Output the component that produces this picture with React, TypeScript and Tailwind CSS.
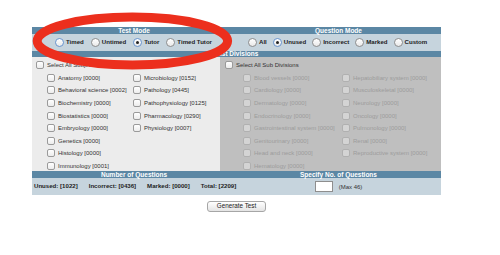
import React from "react";

const font = { fontFamily: '"Liberation Sans", Arial, sans-serif' };

const subjects: [string, string][] = [
  ["Anatomy [0000]", "Microbiology [0152]"],
  ["Behavioral science [0002]", "Pathology [0445]"],
  ["Biochemistry [0000]", "Pathophysiology [0125]"],
  ["Biostatistics [0000]", "Pharmacology [0290]"],
  ["Embryology [0000]", "Physiology [0007]"],
  ["Genetics [0000]", ""],
  ["Histology [0000]", ""],
  ["Immunology [0001]", ""],
];

const subDivisions: [string, string][] = [
  ["Blood vessels [0000]", "Hepatobiliary system [0000]"],
  ["Cardiology [0000]", "Musculoskeletal [0000]"],
  ["Dermatology [0000]", "Neurology [0000]"],
  ["Endocrinology [0000]", "Oncology [0000]"],
  ["Gastrointestinal system [0000]", "Pulmonology [0000]"],
  ["Genitourinary [0000]", "Renal [0000]"],
  ["Head and neck [0000]", "Reproductive system [0000]"],
  ["Hematology [0000]", ""],
];

function Radio({ label, checked, focus }: { label: string; checked?: boolean; focus?: boolean }) {
  return (
    <span className="flex items-center gap-[2px]">
      <span
        className={[
          "flex h-[9px] w-[9px] items-center justify-center rounded-full border bg-[linear-gradient(180deg,#ffffff_0%,#e9e9e9_100%)]",
          checked || focus ? "border-[#6a95cf]" : "border-[#8e8e8e]",
        ].join(" ")}
      >
        {checked ? <span className="h-[3px] w-[3px] rounded-full bg-[#222]" /> : null}
      </span>
      <span className="whitespace-nowrap text-[6.1px] font-bold leading-none text-[#222]">{label}</span>
    </span>
  );
}

function Check({ label, disabled }: { label: string; disabled?: boolean }) {
  return (
    <span className="flex items-center gap-[3px]">
      <span
        className={[
          "h-[8px] w-[8px] shrink-0 rounded-[2px] border",
          disabled ? "border-[#b0b0b0] bg-[#d4d4d4]" : "border-[#9a9a9a] bg-[linear-gradient(180deg,#ffffff_0%,#ececec_100%)]",
        ].join(" ")}
      />
      <span className={["whitespace-nowrap text-[6px] leading-none", disabled ? "text-[#9c9c9c]" : "text-[#333]"].join(" ")}>
        {label}
      </span>
    </span>
  );
}

export default function App() {
  return (
    <div className="relative h-[255px] w-[500px] overflow-hidden bg-white" style={font}>
      <div className="ml-[32px] w-[409px] pt-[27px]">
        <div className="grid h-[7px] grid-cols-[204px_205px] bg-[#5b87a4] text-[6.5px] font-bold leading-[7px] text-white">
          <div className="text-center">Test Mode</div>
          <div className="text-center">Question Mode</div>
        </div>
        <div className="flex h-[17px] bg-[#c6d4dd]">
          <div className="flex w-[188px] items-center gap-[7px] pl-[23px]">
            <Radio label="Timed" focus />
            <Radio label="Untimed" />
            <Radio label="Tutor" checked />
            <Radio label="Timed Tutor" />
          </div>
          <div className="flex items-center gap-[6px] pl-[28px]">
            <Radio label="All" />
            <Radio label="Unused" checked />
            <Radio label="Incorrect" />
            <Radio label="Marked" />
            <Radio label="Custom" />
          </div>
        </div>
        <div className="h-[6px] whitespace-nowrap bg-[#5b87a4] pl-[184px] text-[6.5px] font-bold leading-[6px] text-white">
          List Divisions
        </div>
        <div className="flex h-[114px]">
          <div className="w-[188px] bg-[#ececec] pt-[2px]">
            <div className="flex h-[12.6px] items-center pl-[4px]">
              <Check label="Select All Subjects" />
            </div>
            {subjects.map(([a, b]) => (
              <div key={a} className="grid h-[12.6px] grid-cols-[86px_1fr] items-center pl-[15px]">
                <Check label={a} />
                {b ? <Check label={b} /> : <span />}
              </div>
            ))}
          </div>
          <div className="flex-1 bg-[#bfbfbf] pt-[2px]">
            <div className="flex h-[12.6px] items-center pl-[5px]">
              <Check label="Select All Sub Divisions" />
            </div>
            {subDivisions.map(([a, b]) => (
              <div key={a} className="grid h-[12.6px] grid-cols-[99px_1fr] items-center pl-[23px]">
                <Check label={a} disabled />
                {b ? <Check label={b} disabled /> : <span />}
              </div>
            ))}
          </div>
        </div>
        <div className="grid h-[7px] grid-cols-[204px_205px] bg-[#5b87a4] text-[6.5px] font-bold leading-[7px] text-white">
          <div className="text-center">Number of Questions</div>
          <div className="text-center">Specify No. of Questions</div>
        </div>
        <div className="grid h-[17px] grid-cols-[204px_205px] bg-[#c6d4dd]">
          <div className="flex items-center gap-[11px] whitespace-nowrap pl-[2px] text-[6.1px] font-bold leading-none text-[#222]">
            <span>Unused: [1022]</span>
            <span>Incorrect: [0436]</span>
            <span>Marked: [0000]</span>
            <span>Total: [2209]</span>
          </div>
          <div className="flex items-center justify-center gap-[6px]">
            <span className="h-[11px] w-[18px] border border-[#8e8e8e] bg-white" />
            <span className="whitespace-nowrap text-[6px] leading-none text-[#333]">(Max 46)</span>
          </div>
        </div>
        <div className="flex justify-center pt-[6px]">
          <button className="h-[11px] w-[59px] whitespace-nowrap rounded-[3px] border border-[#a6a6a6] bg-[linear-gradient(180deg,#ffffff_0%,#e4e4e4_100%)] text-[6.3px] leading-none text-[#222]">
            Generate Test
          </button>
        </div>
      </div>
      <svg className="pointer-events-none absolute left-0 top-0" width="500" height="255">
        <ellipse cx="132.4" cy="41" rx="95.2" ry="24" fill="none" stroke="#ec2f1d" strokeWidth="9" />
      </svg>
    </div>
  );
}
